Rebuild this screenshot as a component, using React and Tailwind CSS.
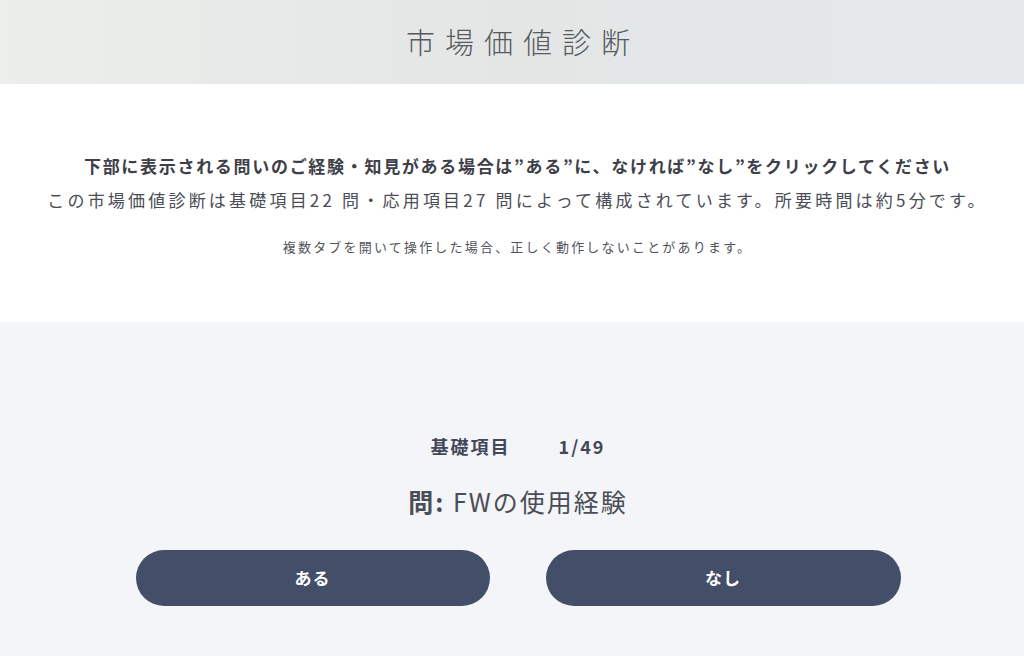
import React from "react";

const jp = { fontFamily: '"Noto Sans CJK JP", "Noto Sans", sans-serif' };

function App() {
  return (
    <div className="min-h-[656px] bg-[#f3f5f8] text-[#3c4150]" style={jp}>
      {/* Title bar */}
      <div className="h-[84px] flex items-center justify-center pl-[12px] bg-gradient-to-r from-[#eceeeb] via-[#e3e6e5] to-[#e6e9ec]">
        <h1 className="text-[29px] font-light tracking-[10px] pl-[10px] text-[#555a60] leading-none pb-[2px]">
          市場価値診断
        </h1>
      </div>

      {/* Intro */}
      <div className="bg-white h-[238px] flex flex-col items-center pt-[70px] pl-[11px]">
        <p className="text-[17px] font-bold tracking-[1.7px] leading-[24px] text-[#3d4048]">
          下部に表示される問いのご経験・知見がある場合は”ある”に、なければ”なし”をクリックしてください
        </p>
        <p className="text-[17px] tracking-[3.2px] leading-[24px] mt-[10px] text-[#4a4d55]">
          この市場価値診断は基礎項目22 問・応用項目27 問によって構成されています。所要時間は約5分です。
        </p>
        <p className="text-[13px] tracking-[2.2px] mt-[25px] text-[#50535b]">
          複数タブを開いて操作した場合、正しく動作しないことがあります。
        </p>
      </div>

      {/* Question */}
      <div className="flex flex-col items-center pt-[111px] pl-[12px]">
        <div className="flex items-center gap-[48px] text-[18px] font-bold tracking-[2px] text-[#43475a]">
          <span>基礎項目</span>
          <span>1/49</span>
        </div>
        <p className="mt-[25px] text-[25px] tracking-[2px] text-[#4a4d57] leading-[32px]">
          <span className="font-bold">問:</span> FWの使用経験
        </p>
        <div className="mt-[33px] flex gap-[56px]">
          <button className="w-[354px] h-[56px] rounded-full bg-[#434f69] text-white text-[17px] font-bold tracking-[1px]">
            ある
          </button>
          <button className="w-[355px] h-[56px] rounded-full bg-[#434f69] text-white text-[17px] font-bold tracking-[1px]">
            なし
          </button>
        </div>
      </div>
    </div>
  );
}

export default App;
